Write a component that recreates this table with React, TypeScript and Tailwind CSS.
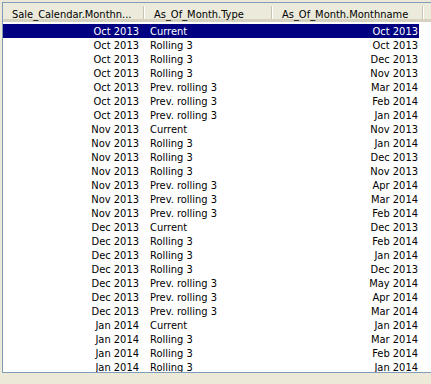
type Row = [string, string, string];

const rows: Row[] = [
  ["Oct 2013", "Current", "Oct 2013"],
  ["Oct 2013", "Rolling 3", "Oct 2013"],
  ["Oct 2013", "Rolling 3", "Dec 2013"],
  ["Oct 2013", "Rolling 3", "Nov 2013"],
  ["Oct 2013", "Prev. rolling 3", "Mar 2014"],
  ["Oct 2013", "Prev. rolling 3", "Feb 2014"],
  ["Oct 2013", "Prev. rolling 3", "Jan 2014"],
  ["Nov 2013", "Current", "Nov 2013"],
  ["Nov 2013", "Rolling 3", "Jan 2014"],
  ["Nov 2013", "Rolling 3", "Dec 2013"],
  ["Nov 2013", "Rolling 3", "Nov 2013"],
  ["Nov 2013", "Prev. rolling 3", "Apr 2014"],
  ["Nov 2013", "Prev. rolling 3", "Mar 2014"],
  ["Nov 2013", "Prev. rolling 3", "Feb 2014"],
  ["Dec 2013", "Current", "Dec 2013"],
  ["Dec 2013", "Rolling 3", "Feb 2014"],
  ["Dec 2013", "Rolling 3", "Jan 2014"],
  ["Dec 2013", "Rolling 3", "Dec 2013"],
  ["Dec 2013", "Prev. rolling 3", "May 2014"],
  ["Dec 2013", "Prev. rolling 3", "Apr 2014"],
  ["Dec 2013", "Prev. rolling 3", "Mar 2014"],
  ["Jan 2014", "Current", "Jan 2014"],
  ["Jan 2014", "Rolling 3", "Mar 2014"],
  ["Jan 2014", "Rolling 3", "Feb 2014"],
  ["Jan 2014", "Rolling 3", "Jan 2014"],
];

const HeaderCell = ({ label, width }: { label: string; width: string }) => (
  <div className={`${width} flex items-start justify-between h-full shrink-0`}>
    <span className="pl-[9px] pt-[5px] whitespace-nowrap">{label}</span>
    <span className="flex h-[13px] mt-[3px] shrink-0">
      <span className="w-px bg-[#c7c5b2]" />
      <span className="w-px bg-white" />
    </span>
  </div>
);

const App = () => {
  return (
    <div
      className="w-[431px] h-[384px] bg-[#ece9d8] overflow-hidden pt-[2px] pl-[2px] text-[11px] leading-[14px] text-black"
      style={{ fontFamily: "'DejaVu Sans Condensed', 'Liberation Sans', sans-serif" }}
    >
      <div className="w-[440px] h-[371px] border border-[#7f9db9] bg-white overflow-hidden">
        <div className="flex h-[19px] bg-[#ebeadb] border-b-[3px] border-[#d6d2c2]">
          <HeaderCell label="Sale_Calendar.Monthn..." width="w-[142px]" />
          <HeaderCell label="As_Of_Month.Type" width="w-[128px]" />
          <HeaderCell label="As_Of_Month.Monthname" width="w-[151px]" />
        </div>
        <div className="pt-[2px]">
          {rows.map((r, i) => (
            <div
              key={i}
              className={`flex w-[416px] h-[14px] pt-px ${i === 0 ? "bg-[#000080] text-white" : ""}`}
            >
              <div className="w-[141px] text-right pr-[5px] shrink-0">{r[0]}</div>
              <div className="w-[128px] pl-[6px] shrink-0">{r[1]}</div>
              <div className="w-[147px] text-right pr-[1px] shrink-0">{r[2]}</div>
            </div>
          ))}
        </div>
      </div>
    </div>
  );
};

export default App;
